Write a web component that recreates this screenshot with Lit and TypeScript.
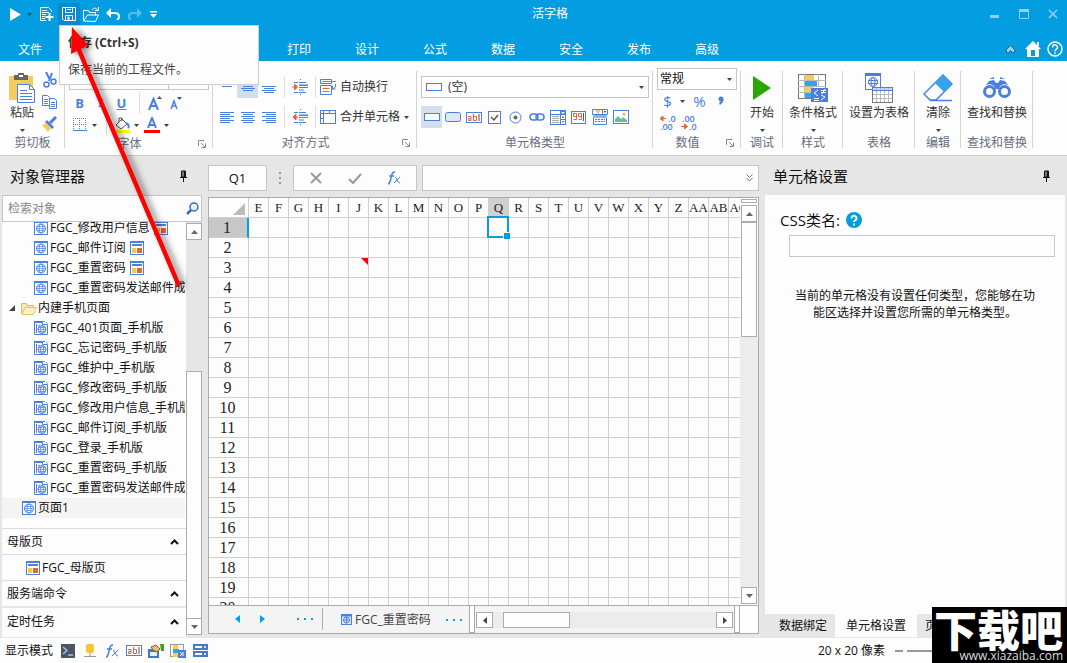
import { LitElement, html, svg, css, nothing } from "lit";
import { customElement, state } from "lit/decorators.js";
import { classMap } from "lit/directives/class-map.js";

const B = "#4a7fe0";
const icon = (w: number, h: number, body: unknown) =>
  html`<svg width=${w} height=${h} viewBox="0 0 ${w} ${h}" fill="none" aria-hidden="true">${body}</svg>`;

const caret = () => icon(5, 3, svg`<path d="M0 0h5L2.500 3z" fill="#444"/>`);
const launcher = () => icon(8, 8, svg`<path d="M.5 6V.5H6" stroke="#888"/><path d="M3 3l4 4M7.500 3.500v4h-4" stroke="#888"/>`);
const globePage = () => icon(14, 14, svg`
  <rect x=".5" y=".5" width="13" height="13" fill="#fff" stroke=${B}/><path d="M0 0h14v2H0z" fill=${B}/>
  <circle cx="7" cy="7.500" r="4.500" stroke=${B}/><path d="M2 7.500h10M3 5.500h8M3 9.500h8" stroke=${B} stroke-width=".7"/>
  <ellipse cx="7" cy="7.500" rx="2" ry="4.500" stroke=${B} stroke-width=".8"/>`);
const phonePage = () => icon(14, 14, svg`
  <path d="M.5.5h8v3h5v10H.5z" fill="#fff" stroke=${B}/><path d="M0 0h8v2H0z" fill=${B}/><path d="M2.500 3v9" stroke=${B}/>
  <circle cx="8" cy="8.500" r="4" stroke=${B}/><path d="M4 8.500h8M5 6.500h6M5 10.500h6" stroke=${B} stroke-width=".7"/>
  <ellipse cx="8" cy="8.500" rx="1.500" ry="4" stroke=${B} stroke-width=".8"/>
  <path d="M9 .5h2M12 1l1.500 1.500M4 5l2-1" stroke="#2aa8e8"/>`);
const masterPage = () => icon(14, 14, svg`
  <rect x=".5" y=".5" width="13" height="13" fill="#fff" stroke=${B}/><path d="M0 0h14v2H0zM2 3h10v2H2z" fill=${B}/>
  <path d="M2 7h4v5H2z" fill="#f6c945"/><path d="M7 7h5v5H7z" fill="#e2673a"/>`);
const folder = () => icon(16, 13, svg`
  <path d="M.5 11.500v-10h5l1 2h6v2" fill="#f8e6ae" stroke="#dcb964"/><path d="M1 12.500l3-7h11.500l-3 7z" fill="#fdf0c4" stroke="#e3c274"/>`);
const pin = () => icon(7, 12, svg`<path d="M1.500 1h4v6h-4z" fill="#777" stroke="#111"/><path d="M4 1h2v6H4z" fill="#111"/><path d="M0 7.500h7M3.500 8v4" stroke="#111"/>`);
const chevronUp = () => icon(9, 6, svg`<path d="M1 5l3.500-3.500L8 5" stroke="#111" stroke-width="2"/>`);
const up = () => icon(7, 4, svg`<path d="M0 4h7L3.500 0z" fill="#666"/>`);
const down = () => icon(7, 4, svg`<path d="M0 0h7L3.500 4z" fill="#666"/>`);

const lines = (ws: number[], mode: "l" | "c" | "r", top: number) =>
  icon(14, 14, ws.map((w, i) => {
    const x = mode === "l" ? 0 : mode === "r" ? 14 - w : (14 - w) / 2;
    return svg`<rect x=${x} y=${top + i * 2} width=${w} height="1" fill=${B}/>`;
  }));
const para = [14, 10, 14, 10, 14, 10];
const indent = (out: boolean) => icon(16, 16, svg`
  <path d="M8 .5h1M2 3.500h4M7 3.500h7M7 6h9M7 8.500h9M7 11h5M2 13.500h4M7 13.500h7M8 15.500h1" stroke=${B}/><path d="M7 6h9v1H7z" fill=${B}/>
  <path d=${out ? "M1 8h5M4 5L1 8l3 3z" : "M0 8h5M2.500 5l3 3-3 3z"} stroke="#e2673a" fill="#e2673a"/>`);
const wrapIcon = () => icon(16, 16, svg`
  <path d="M.5.5h11v4H.5zM.5 6.500h11v9H.5z" stroke=${B}/><path d="M2 2.500h14M2.500 9.500h7M2.500 12.500h7" stroke="#e2673a"/><path d="M15.500 5v3l-3 2M12.500 7v3h3" stroke=${B}/>`);
const mergeIcon = () => icon(16, 14, svg`<rect x=".5" y=".5" width="15" height="13" stroke=${B}/><path d="M.5 3.500h15M3.500.5v13M9.500.5v3M.5 8.500h3" stroke=${B}/>`);

const cut = () => icon(14, 16, svg`<path d="M3 0l4 8M9 1L6 9" stroke=${B} stroke-width="2"/><circle cx="3.500" cy="12.500" r="2.500" stroke=${B} stroke-width="1.500"/><circle cx="10.500" cy="9.500" r="2.500" stroke=${B} stroke-width="1.500"/>`);
const copy = () => icon(16, 14, svg`<path d="M.5.5h5l2 2v8h-7zM7.500 3.500h5l2 2v8h-7z" fill="#fff" stroke=${B}/><path d="M2 4.500h4M2 6.500h4M2 8.500h4M9 7.500h4M9 9.500h4M9 11.500h4" stroke=${B}/>`);
const brush = () => icon(16, 16, svg`<path d="M14 1L8 7" stroke=${B} stroke-width="3"/><path d="M5 4l7 7-2 2-7-7z" fill=${B}/><path d="M0 9l4-2 5 5-3 4z" fill="#f3cd5c"/>`);
const paste = () => icon(26, 30, svg`
  <path d="M0 3h24v24H0z" fill="#f3cd5c"/><path d="M5 2h4V0h6v2h4v5H5z" fill="#666"/><path d="M10 2h4v2h-4z" fill="#fff"/>
  <path d="M8.500 11.500h12l5 5v13h-17z" fill="#fff" stroke=${B}/><path d="M20.500 11.500v5h5M11 17.500h7M11 20.500h12M11 23.500h12M11 26.500h12" stroke=${B}/>`);

const rectIcon = () => icon(16, 8, svg`<rect x=".5" y=".5" width="15" height="7" fill="#fff" stroke=${B}/>`);
const cellTypes: [string, () => unknown][] = [
  ["空", rectIcon],
  ["按钮", () => icon(16, 10, svg`<rect x=".5" y=".5" width="15" height="9" rx="2" fill="#dbe7fb" stroke=${B}/>`)],
  ["文本框", () => icon(16, 11, svg`<rect x=".5" y=".5" width="15" height="10" fill="#fff" stroke=${B}/><g stroke="#e2673a"><path d="M2 4.500h3v4H2.500v-2H5M7.500 2v6.500h3v-4h-3"/></g><path d="M13 2v7" stroke="#555"/>`)],
  ["复选框", () => icon(13, 13, svg`<rect x=".5" y=".5" width="12" height="12" fill="#fff" stroke=${B}/><path d="M3 6l3 3 4-5" stroke="#555" stroke-width="1.500"/>`)],
  ["单选框", () => icon(13, 13, svg`<circle cx="6.500" cy="6.500" r="5.500" fill="#fff" stroke=${B}/><circle cx="6.500" cy="6.500" r="2" fill="#666"/>`)],
  ["超链接", () => icon(16, 8, svg`<rect x="1" y="1" width="8" height="6" rx="3" stroke=${B} stroke-width="1.500"/><rect x="7" y="1" width="8" height="6" rx="3" stroke=${B} stroke-width="1.500"/>`)],
  ["组合框", () => icon(16, 15, svg`<rect x=".5" y=".5" width="15" height="14" fill="#fff" stroke=${B}/><path d="M10 0h6v5h-6z" fill=${B}/><path d="M11 2h4l-2 2z" fill="#fff"/><path d="M.5 4.500h15M10.500 4v11M10.500 9.500h5" stroke=${B}/><path d="M2 6.500h7M2 8.500h7M2 10.500h7M2 12.500h7" stroke="#aaa"/><path d="M12 8l1-2 1 2zM12 11h2l-1 2z" fill="#444"/>`)],
  ["数字", () => icon(15, 13, svg`<rect x=".5" y=".5" width="14" height="12" fill="#fff" stroke=${B}/><path d="M2.500 8.500h3v-6h-3v3h3M7.500 8.500h3v-6h-3v3h3" stroke="#e2673a"/><path d="M12.500 2v8" stroke="#555"/>`)],
  ["日期", () => icon(16, 16, svg`<path d="M.5.5h15v5H.5zM1.500 6.500h13v9h-13z" fill="#fff" stroke=${B}/><path d="M10.500 0v6" stroke=${B}/><path d="M4 1l2 2 2-2M6 3v2" stroke="#f3b83c" stroke-width="1.500"/><path d="M11.500 2h3L13 4z" fill="#555"/><path d="M1 6h14v3H1z" fill="#8fb2f2"/><path d="M3 10.500h10M3 12.500h10" stroke="#b0604a" stroke-dasharray="2 1"/>`)],
  ["图片", () => icon(16, 14, svg`<rect x=".5" y=".5" width="15" height="13" fill="#fff" stroke=${B}/><circle cx="11" cy="4" r="1.500" fill="#f3b83c"/><path d="M2 12V9l3-3 3 3 2-2 4 3v2z" fill="#5fc29a"/>`)],
];

const tabs = ["打印", "设计", "公式", "数据", "安全", "发布", "高级"];
const columns = ["E", "F", "G", "H", "I", "J", "K", "L", "M", "N", "O", "P", "Q", "R", "S", "T", "U", "V", "W", "X", "Y", "Z", "AA", "AB", "AC"];
const rows = Array.from({ length: 20 }, (_, i) => i + 1);
const pcPages: [string, boolean][] = [["FGC_修改用户信息", true], ["FGC_邮件订阅", true], ["FGC_重置密码", true], ["FGC_重置密码发送邮件成功", false]];
const phonePages = ["FGC_401页面_手机版", "FGC_忘记密码_手机版", "FGC_维护中_手机版", "FGC_修改密码_手机版", "FGC_修改用户信息_手机版", "FGC_邮件订阅_手机版", "FGC_登录_手机版", "FGC_重置密码_手机版", "FGC_重置密码发送邮件成功_手机版"];

@customElement("app-root")
export class AppRoot extends LitElement {
  @state() private cellType = 0;

  static styles = css`
    :host { display: block; color: #111; font: 12px/16px "Open Sans", "Noto Sans CJK SC", sans-serif; }
    * { box-sizing: border-box; }
    svg { display: block; flex: none; }
    button, input, select { font: inherit; color: inherit; margin: 0; padding: 0; border: 0; border-radius: 0; background: none; outline: none; }
    button { display: flex; align-items: center; justify-content: center; }
    select { appearance: none; }
    a { color: inherit; text-decoration: none; }
    .app { position: relative; display: flex; flex-direction: column; height: 100vh; overflow: hidden; background: #fdfdfd; }

    .top { background: #039de2; color: #fff; flex: none; }
    .titlebar { display: grid; grid-template-columns: 1fr auto 1fr; align-items: center; height: 28px; }
    .quick { display: flex; align-items: center; padding-left: 9px; }
    .quick button { width: 22px; height: 22px; }
    .quick .play { width: 13px; }
    .quick .narrow { width: 14px; }
    .quick .save { background: #0b88cf; }
    .title { padding-left: 33px; }
    .winbtns { display: flex; justify-content: flex-end; gap: 17px; padding-right: 8px; }
    .winbtns button { width: 12px; height: 12px; }
    .tabs { display: flex; align-items: center; height: 33px; padding: 0 4px 0 0; }
    .tabs a { width: 68px; text-align: center; height: 33px; line-height: 23px; padding-top: 10px; }
    .tabs .file { width: 60px; margin-right: 205px; }
    .tools { display: flex; align-items: center; gap: 6px; margin-left: auto; padding-top: 9px; }
    .tools .fold { width: 18px; }

    .ribbon { display: flex; flex: none; height: 95px; padding-top: 7px; border-bottom: 1px solid #cfcfcf; color: #333; }
    .group { display: flex; flex-direction: column; flex: none; padding-bottom: 4px; background: linear-gradient(#d4d4d4, #d4d4d4) right 3px / 1px 77px no-repeat; }
    .gbody { flex: 1; display: flex; }
    .glabel { display: flex; align-items: center; justify-content: center; height: 16px; color: #666e80; }
    .glabel.launch { padding-right: 3px; }
    .glabel.launch span { flex: 1; text-align: center; }
    .glabel button { width: 16px; height: 16px; }
    .g65 { width: 65px; } .g148 { width: 148px; } .g204 { width: 204px; } .g236 { width: 236px; } .g88 { width: 88px; }
    .g42 { width: 42px; } .g60 { width: 60px; } .g72 { width: 72px; } .g46 { width: 46px; }
    .big { flex-direction: column; justify-content: flex-start; flex: 1; padding-top: 3px; white-space: nowrap; }
    .big .pic { height: 34px; display: flex; align-items: center; }
    .big .car { height: 11px; display: flex; align-items: flex-end; }
    .pastebtn { flex: none; width: 44px; }
    .smallcol { display: flex; flex-direction: column; gap: 6px; padding-top: 4px; }
    .smallcol button { width: 12px; height: 16px; }
    .col { flex: 1; display: flex; flex-direction: column; }
    .line { display: flex; align-items: center; height: 22px; }
    .line button { width: 21px; height: 22px; flex: none; }
    .line .on, .types .on { background: #d5deec; }
    .line .wide { width: auto; gap: 4px; }
    .line .dd { width: 9px; }
    .sep { width: 1px; height: 22px; background: #ddd; flex: none; }
    .fonts { padding-left: 4px; }
    .fonts .sep { margin: 0 4px 0 7px; }
    .fonts .combos { display: flex; height: 22px; margin-bottom: 2px; }
    .fonts select { border: 1px solid #c6c6c6; height: 22px; padding-left: 3px; }
    .fonts .face { width: 100px; } .fonts .size { width: 40px; border-left: 0; }
    .glyph { color: #4a7fe0; font-weight: 700; font-size: 13px; line-height: 16px; }
    .it { font-style: italic; font-family: "Liberation Serif", serif; }
    .un { text-decoration: underline; }
    .aligns { padding: 8px 0 0 3px; gap: 8px; }
    .aligns .sep { margin: 0 4px 0 5px; }
    .types-g { padding: 8px 4px 0 4px; gap: 8px; }
    .picker { display: flex; align-items: center; height: 22px; border: 1px solid #c6c6c6; background: #fff; padding: 0 4px; gap: 4px; }
    .picker select { flex: 1; min-width: 0; height: 20px; padding-left: 2px; }
    .types { display: flex; }
    .types button { width: 21px; height: 22px; flex: none; }
    .nums { padding-left: 4px; }
    .nums .picker { width: 80px; padding: 0 4px 0 0; color: #111; }
    .nums .line button { color: #4a7fe0; font-size: 15px; }
    .nums .pct { margin-left: 2px; }
    .nums .deci { height: 20px; }
    .deci svg { overflow: visible; }
    .deci text { font: 600 9px "Open Sans", sans-serif; fill: #4a7fe0; }

    .work { flex: 1; min-height: 0; display: grid; grid-template-columns: 200px minmax(0, 1fr) 300px; gap: 6px; padding: 0 2px 1px; background: #e6e6e6; }
    .panel { display: flex; flex-direction: column; min-height: 0; min-width: 0; }
    .phead { display: flex; align-items: center; justify-content: space-between; height: 39px; flex: none; padding: 0 15px 0 8px; font-size: 15px; line-height: 20px; }
    .search { display: flex; align-items: center; height: 27px; border: 1px solid #c6c6c6; background: #fdfdfd; padding: 0 2px 0 5px; flex: none; }
    .search input { flex: 1; min-width: 0; }
    .search input::placeholder { color: #888; opacity: 1; }
    .objects { flex: 1; min-height: 0; display: flex; }
    .lists { flex: 1; min-width: 0; display: flex; flex-direction: column; background: #fdfdfd; }
    .tree { flex: 1; min-height: 0; overflow: hidden; display: flex; flex-direction: column; margin-right: 1px; }
    .tree ul { list-style: none; margin: -4px 0 0; padding: 0; }
    .tree li { display: flex; align-items: center; height: 20px; white-space: nowrap; gap: 2px; padding-left: 32px; }
    .tree .more { gap: 4px; }
    .tree .more span { margin-left: -2px; }
    .tree .dir { padding-left: 7px; gap: 1px; }
    .tree .dir button { width: 11px; justify-content: flex-start; }
    .tree .root { padding-left: 20px; background: #f4f4f4; }
    .sect { display: flex; align-items: center; justify-content: space-between; flex: none; height: 26px; border: 0; border-top: 1px solid #d9dde0; padding: 0 7px 0 5px; width: 100%; }
    .leaf { display: flex; align-items: center; flex: none; height: 26px; gap: 2px; border-top: 1px solid #d9dde0; padding-left: 24px; }
    .last { height: 31px; border-top: 2px solid #e6e6e6; padding-bottom: 2px; }
    .vbar { display: flex; flex-direction: column; width: 16px; padding: 1px 0 2px; flex: none; }
    .vbar button, .hbar button { background: #fff; border: 1px solid #ababab; flex: none; }
    .vbar button { height: 17px; }
    .thumb { background: #fdfdfd; border: 1px solid #ababab; }
    .before { flex: 131; } .obj-thumb { flex: 247; margin-bottom: -1px; }

    .center { display: flex; flex-direction: column; min-width: 0; min-height: 0; padding: 9px 0 3px; gap: 6px; }
    .formula { display: flex; height: 26px; flex: none; }
    .box { border: 1px solid #c6c6c6; background: #fdfdfd; }
    .name { width: 59px; text-align: center; font-size: 13px; }
    .dots { width: 26px; display: flex; align-items: center; justify-content: center; }
    .fx { display: flex; width: 124px; padding: 0 3px; margin-right: 5px; }
    .fx button { flex: 1; }
    .expr { flex: 1; display: flex; align-items: center; padding-right: 5px; min-width: 0; }
    .expr input { flex: 1; min-width: 0; }
    .book { flex: 1; min-height: 0; display: flex; flex-direction: column; border: 1px solid #ababab; background: #fdfdfd; }
    .sheet { flex: 1; min-height: 0; display: flex; }
    .cells { flex: 1; min-width: 0; overflow: hidden; }
    table { table-layout: fixed; border-spacing: 0; width: 540px; font-family: "Liberation Serif", "Noto Sans CJK SC", serif; }
    th, td { width: 20px; height: 20px; padding: 0; border: 0 solid #d0d0d0; border-width: 0 1px 1px 0; font-weight: 400; font-size: 13px; line-height: 19px; text-align: center; color: #222; white-space: nowrap; }
    tbody th { font-size: 16px; padding-right: 2px; }
    .corner { width: 40px; }
    .corner svg { margin: 3px 3px 0 auto; }
    th.cur { background: #d0d0d0; }
    tbody th.cur { background: #c8c8c8; border-right: 2px solid #039de2; }
    .sel, .note { position: relative; }
    .sel::before { content: ""; position: absolute; inset: -2px -1px -1px -2px; border: 2px solid #039de2; }
    .sel::after { content: ""; position: absolute; right: -2px; bottom: -2px; width: 6px; height: 6px; background: #039de2; border: solid #fff; border-width: 1px 0 0 1px; }
    .note::after { content: ""; position: absolute; top: 0; right: 0; width: 7px; height: 7px; background: #f00; clip-path: polygon(0 0, 100% 0, 100% 100%); }
    .sheet .vbar { width: 18px; padding: 1px; background: #fdfdfd; }
    .split { height: 4px; border: 1px solid #ababab; margin-bottom: 2px; flex: none; }
    .sheet-thumb { flex: 114; } .after { flex: 251; background: #ececec; margin: 0 -1px; }
    .bottom { display: flex; flex: none; height: 28px; border-top: 1px solid #ababab; background: #f4f4f4; color: #444; }
    .nav { display: flex; align-items: center; padding-left: 16px; width: 114px; border-right: 1px solid #ababab; margin: 2px 0 3px; }
    .nav button { width: 25px; flex: none; }
    .nav .dotb { margin-left: 10px; width: 40px; }
    .tab { flex: 1; display: flex; align-items: center; justify-content: flex-start; gap: 3px; padding-left: 18px; min-width: 0; white-space: nowrap; }
    .tab .trail { margin-left: 12px; }
    .handle { width: 6px; background: #fff; border: 1px solid #ababab; border-width: 0 1px 1px; flex: none; }
    .hbar { display: flex; width: 259px; padding: 6px 1px 5px; background: #f4f4f4; flex: none; }
    .hbar button { width: 17px; }
    .htrack { flex: 1; display: flex; background: #ececec; padding-left: 10px; }
    .htrack .thumb { width: 67px; }
    .blank { width: 18px; background: #fdfdfd; }

    .set { flex: 1; min-height: 0; background: #fdfdfd; padding: 14px 10px 0 15px; }
    .css { display: flex; align-items: center; gap: 6px; font-size: 15px; line-height: 22px; }
    .css button { width: 16px; height: 16px; }
    .cssinput { display: block; width: calc(100% - 9px); height: 22px; margin: 4px 0 0 9px; border: 1px solid #c6c6c6; padding: 0 4px; }
    .hint { margin: 30px auto 0 15px; width: 240px; line-height: 17px; text-align: center; }
    .ptabs { display: flex; flex: none; height: 23px; }
    .ptabs button { width: 82px; }
    .ptabs .first { width: 70px; padding-left: 6px; }
    .ptabs .act { background: #fdfdfd; }
    .ptabs .third { width: auto; padding-left: 8px; }

    .status { display: flex; align-items: center; flex: none; height: 25px; padding-left: 5px; }
    .modes { display: flex; gap: 6px; padding-left: 7px; }
    .modes button { width: 16px; height: 16px; }
    .zoomer { margin-left: auto; display: flex; align-items: center; gap: 7px; width: 249px; }
    .zoomer button { width: 8px; height: 8px; margin-left: 3px; }
    .zoomer input { appearance: none; width: 120px; height: 2px; background: #999; margin-left: -3px; }

    .tip { position: absolute; left: 59px; top: 25px; width: 200px; height: 60px; padding: 9px 8px; border: 1px solid #cfcfcf; background: #fdfdfd; color: #444; display: flex; flex-direction: column; gap: 11px; }
    .tip b { color: #333; }
    .arrow { position: absolute; left: 60px; top: 20px; filter: drop-shadow(4px 1px 3px rgba(0, 0, 0, 0.5)); pointer-events: none; }
    .mark { position: absolute; right: 0; bottom: 0; width: 135px; height: 56px; background: #000; color: #fff; display: flex; flex-direction: column; overflow: hidden; }
    .mark strong { font: 900 43px/42px "Noto Sans CJK SC", sans-serif; padding-left: 2px; white-space: nowrap; }
    .mark span { text-align: right; padding-right: 4px; line-height: 14px; color: #ddd; }
  `;

  private big(label: string, pic: unknown, drop: boolean) {
    return html`<button class="big"><span class="pic">${pic}</span><span>${label}</span>${drop ? html`<span class="car">${caret()}</span>` : nothing}</button>`;
  }

  private top() {
    return html`<header class="top">
      <div class="titlebar">
        <div class="quick">
          <button class="play" aria-label="运行">${icon(11, 13, svg`<path d="M0 0l11 6.500L0 13z" fill="#fff"/>`)}</button>
          <button class="narrow" aria-label="运行选项">${icon(5, 3, svg`<path d="M0 0h5L2.500 3z" fill="#1d4f6c"/>`)}</button>
          <button aria-label="新建">${icon(14, 15, svg`<path d="M11.500 5V3.500l-3-3h-8v13H6" stroke="#fff"/><path d="M2 3.500h5M2 5.500h7M2 7.500h4M2 9.500h3M2 11.500h3" stroke="#fff"/><path d="M9.500 6v8M5.500 10h8" stroke="#fff" stroke-width="2"/>`)}</button>
          <button class="save" aria-label="保存">${icon(14, 14, svg`<path d="M.5.5h13v13H2l-1.500-1.500z" stroke="#fff"/><path d="M3.500.5v5h7v-5M3.500 13.500v-5h7v5" stroke="#fff"/><path d="M5 2.500h4M6 10h1v3H6z" stroke="#fff"/>`)}</button>
          <button aria-label="打开">${icon(17, 15, svg`<path d="M.5 13.500v-10h5l1 2h6v3M.5 14l4-6h11l-3 6.500z" stroke="#fff"/><path d="M9 3c2-3 4-2 6 0M15.500 0v3.500H12" stroke="#fff"/>`)}</button>
          <button aria-label="撤销">${icon(14, 12, svg`<path d="M1 5h8c5 0 5 5 2 7" stroke="#fff" stroke-width="2"/><path d="M0 5l5-5v10z" fill="#fff"/>`)}</button>
          <button aria-label="重做">${icon(14, 12, svg`<path d="M13 5H5C0 5 0 10 3 12" stroke="#56bdeb" stroke-width="2"/><path d="M14 5L9 0v10z" fill="#56bdeb"/>`)}</button>
          <button class="narrow" aria-label="自定义">${icon(7, 7, svg`<path d="M0 0h7v1.500H0zM0 3h7L3.500 7z" fill="#fff"/>`)}</button>
        </div>
        <span class="title">活字格</span>
        <div class="winbtns">
          <button aria-label="最小化">${icon(10, 10, svg`<path d="M0 6h9v3H0z" fill="#8fd3f2"/>`)}</button>
          <button aria-label="最大化">${icon(10, 10, svg`<path d="M.5 1.500h9v8h-9z" stroke="#8fd3f2"/><path d="M0 0h10v3H0z" fill="#8fd3f2"/>`)}</button>
          <button aria-label="关闭">${icon(10, 10, svg`<path d="M1 1l8 8M9 1L1 9" stroke="#8fd3f2" stroke-width="1.500"/>`)}</button>
        </div>
      </div>
      <nav class="tabs">
        <a class="file" href="#">文件</a>${tabs.map((t) => html`<a href="#">${t}</a>`)}
        <div class="tools">
          <button class="fold" aria-label="折叠功能区">${icon(9, 8, svg`<path d="M.5 7.500v-3l4-4 4 4v3h-2l-2-2-2 2z" fill="#8fd3f2" stroke="#44606e"/>`)}</button>
          <button aria-label="主页">${icon(16, 16, svg`<path d="M8 0l8 8h-2v8H2V8H0z" fill="#fff"/><path d="M12 1h2v4h-2z" fill="#fff"/><path d="M6 9h4v6H6z" fill="#039de2"/>`)}</button>
          <button aria-label="帮助">${icon(16, 16, svg`<circle cx="8" cy="8" r="7" stroke="#fff" stroke-width="1.500"/><path d="M5.500 6.500c0-4 5-3 5 0 0 2-2.500 1.500-2.500 4M8 11.500v1.500" stroke="#fff" stroke-width="1.500"/>`)}</button>
        </div>
      </nav>
    </header>`;
  }

  private ribbon() {
    return html`<section class="ribbon">
      <div class="group g65">
        <div class="gbody">
          <button class="big pastebtn"><span class="pic">${paste()}</span><span>粘贴</span><span class="car">${caret()}</span></button>
          <div class="smallcol"><button aria-label="剪切">${cut()}</button><button aria-label="复制">${copy()}</button><button aria-label="格式刷">${brush()}</button></div>
        </div>
        <div class="glabel">剪切板</div>
      </div>
      <div class="group g148">
        <div class="gbody"><div class="col fonts">
          <div class="combos">
            <select class="face" aria-label="字体"><option>微软雅黑主题</option></select>
            <select class="size" aria-label="字号"><option></option></select>
          </div>
          <div class="line">
            <button class="glyph">B</button><button class="glyph it">I</button><button class="glyph un">U</button>
            <span class="sep"></span>
            <button aria-label="增大字号">${icon(14, 14, svg`<path d="M1 14L5.500 3 10 14M3 10h5" stroke=${B} stroke-width="2"/><path d="M9 3h5l-2.500-3z" fill="#555"/>`)}</button>
            <button aria-label="减小字号">${icon(12, 14, svg`<path d="M1 13l3-8 3 8M2 10h4" stroke=${B} stroke-width="1.500"/><path d="M7 1h5L9.500 4z" fill="#555"/>`)}</button>
          </div>
          <div class="line">
            <button aria-label="边框">${icon(14, 14, svg`<path d="M.5 0v12M6.500 0v12M12.500 0v12M0 .5h14M0 6.500h14" stroke="#777" stroke-dasharray="1 1"/><path d="M0 12.500h14" stroke=${B}/>`)}</button>
            <button class="dd" aria-label="边框选项">${caret()}</button>
            <span class="sep"></span>
            <button aria-label="填充">${icon(16, 16, svg`<path d="M2 8l6-6 5 5-6 5z" fill="#fff" stroke="#555"/><path d="M5 5V1h3v3" stroke="#555"/><path d="M12 6c3 1 3 4 2 5" stroke=${B} stroke-width="2"/><path d="M0 13h16v3H0z" fill="#ff0"/>`)}</button>
            <button class="dd" aria-label="填充选项">${caret()}</button>
            <button aria-label="字体颜色">${icon(16, 16, svg`<path d="M4 11L8 1l4 10M5 8h6" stroke=${B} stroke-width="2"/><path d="M0 13h16v3H0z" fill="red"/>`)}</button>
            <button class="dd" aria-label="字体颜色选项">${caret()}</button>
          </div>
        </div></div>
        <div class="glabel launch"><span>字体</span><button aria-label="字体设置">${launcher()}</button></div>
      </div>
      <div class="group g204">
        <div class="gbody"><div class="col aligns">
          <div class="line">
            <button aria-label="顶端对齐">${lines([14, 10, 14, 10], "c", 0)}</button><button class="on" aria-label="垂直居中">${lines([14, 10, 14, 10], "c", 4)}</button><button aria-label="底端对齐">${lines([14, 10, 14, 10], "c", 6)}</button>
            <span class="sep"></span><button aria-label="增加缩进">${indent(false)}</button><span class="sep"></span>
            <button class="wide">${wrapIcon()}自动换行</button>
          </div>
          <div class="line">
            <button aria-label="左对齐">${lines(para, "l", 2)}</button><button aria-label="居中">${lines(para, "c", 2)}</button><button aria-label="右对齐">${lines(para, "r", 2)}</button>
            <span class="sep"></span><button aria-label="减少缩进">${indent(true)}</button><span class="sep"></span>
            <button class="wide">${mergeIcon()}合并单元格${caret()}</button>
          </div>
        </div></div>
        <div class="glabel launch"><span>对齐方式</span><button aria-label="对齐设置">${launcher()}</button></div>
      </div>
      <div class="group g236">
        <div class="gbody"><div class="col types-g">
          <div class="picker">${rectIcon()}<select aria-label="单元格类型"><option>(空)</option></select>${caret()}</div>
          <div class="types">${cellTypes.map(([n, ic], i) => html`<button aria-label=${n} class=${classMap({ on: i === this.cellType })} @click=${() => (this.cellType = i)}>${ic()}</button>`)}</div>
        </div></div>
        <div class="glabel">单元格类型</div>
      </div>
      <div class="group g88">
        <div class="gbody"><div class="col nums">
          <div class="picker"><select aria-label="数字格式"><option>常规</option></select>${caret()}</div>
          <div class="line"><button>$</button><button class="dd" aria-label="货币选项">${caret()}</button><button class="pct">%</button><button aria-label="千位分隔">${icon(6, 10, svg`<circle cx="3" cy="3" r="2.500" fill=${B}/><path d="M4.500 3c0 3-1 4-3 5" stroke=${B} stroke-width="2"/>`)}</button></div>
          <div class="line deci">
            <button aria-label="增加小数位">${icon(16, 16, svg`<path d="M1 4.500h5M3 2v5L0 4.500z" stroke="#e2673a" fill="#e2673a"/><text x="8" y="8">.0</text><text x="0" y="16">.00</text>`)}</button>
            <button aria-label="减少小数位">${icon(16, 16, svg`<path d="M0 12.500h6M3.500 10v5l3-2.500z" stroke="#e2673a" fill="#e2673a"/><text x="1" y="8">.00</text><text x="8" y="16">.0</text>`)}</button>
          </div>
        </div></div>
        <div class="glabel launch"><span>数值</span><button aria-label="数值设置">${launcher()}</button></div>
      </div>
      <div class="group g42"><div class="gbody">${this.big("开始", icon(18, 24, svg`<path d="M0 0l18 12L0 24z" fill="#28a800"/>`), true)}</div><div class="glabel">调试</div></div>
      <div class="group g60"><div class="gbody">${this.big("条件格式", icon(30, 28, svg`
        <rect x=".5" y=".5" width="27" height="24" fill="#fff" stroke="#777"/><path d="M7 1h9v5H7z" fill="#f3cd5c"/><path d="M7 7h12v6H7z" fill="#31a5ea"/><path d="M7 13h9v5H7z" fill="#f3cd5c"/><path d="M7 19h6v5H7z" fill="#31a5ea"/>
        <path d="M0 6.500h28M0 12.500h28M0 18.500h14M6.500 0v25M20.500 0v13" stroke="#bbb"/><path d="M13 14h17v14H13z" fill=${B}/><path d="M20 16l-4 3 4 3M16 24.500h5M16 26.500h5M23 16.500h5M23 18.500h5M27 15l-3 5M23 21l4 2-4 3" stroke="#fff"/>`), true)}</div><div class="glabel">样式</div></div>
      <div class="group g72"><div class="gbody">${this.big("设置为表格", icon(28, 30, svg`
        <rect x=".5" y=".5" width="15" height="16" fill="#fff" stroke=${B}/><path d="M0 0h16v3H0z" fill=${B}/><circle cx="8" cy="9" r="4.500" stroke=${B}/><path d="M3 7.500h10M3 10.500h10" stroke=${B}/><ellipse cx="8" cy="9" rx="2" ry="4.500" stroke=${B}/>
        <rect x="7.500" y="14.500" width="20" height="15" fill="#fff" stroke="#777"/><path d="M8 15h19v3H8z" fill="#c9daf8"/><path d="M8 21.500h19M8 25.500h19M11.500 15v14M15.500 15v14M19.500 15v14M23.500 15v14" stroke="#bbb"/><path d="M7 17.500h21M7 14.500h21" stroke=${B}/>`), false)}</div><div class="glabel">表格</div></div>
      <div class="group g46"><div class="gbody">${this.big("清除", icon(30, 28, svg`
        <path d="M20 1l9 9-16 16H7l-6-6z" fill="#fff" stroke=${B} stroke-width="1.500"/><path d="M20 1l9 9-8 8-9-9z" fill="#31a5ea"/><path d="M7 26.500h22" stroke=${B} stroke-width="1.500"/>`), true)}</div><div class="glabel">编辑</div></div>
      <div class="group g72"><div class="gbody">${this.big("查找和替换", icon(28, 22, svg`
        <circle cx="6.500" cy="14.500" r="5" stroke=${B} stroke-width="3"/><circle cx="21.500" cy="14.500" r="5" stroke=${B} stroke-width="3"/><path d="M3 8l3-4 5-1 2 3h2l2-3 5 1 3 4-4-1-4 2-1 3h-4l-1-3-4-2z" fill=${B}/><path d="M6 2l5-2v2zM22 2l-5-2v2z" fill=${B}/>`), false)}</div><div class="glabel">查找和替换</div></div>
    </section>`;
  }

  private objects() {
    return html`<aside class="panel">
      <div class="phead"><span>对象管理器</span><button aria-label="固定">${pin()}</button></div>
      <div class="search"><input aria-label="检索对象" placeholder="检索对象" /><button aria-label="搜索">${icon(13, 13, svg`<circle cx="8" cy="5" r="4" fill="#e4f0fb" stroke="#2a6cc0" stroke-width="1.500"/><path d="M5 8l-4 4" stroke="#2a6cc0" stroke-width="2.500"/>`)}</button></div>
      <div class="objects">
        <div class="lists">
          <div class="tree"><ul>
            ${pcPages.map(([n, m]) => html`<li class=${classMap({ more: m })}>${globePage()}<span>${n}</span>${m ? masterPage() : nothing}</li>`)}
            <li class="dir"><button aria-label="折叠">${icon(6, 6, svg`<path d="M6 0v6H0z" fill="#444"/>`)}</button>${folder()}<span>内建手机页面</span></li>
            ${phonePages.map((n) => html`<li>${phonePage()}<span>${n}</span></li>`)}
            <li class="root">${globePage()}<span>页面1</span></li>
          </ul></div>
          <button class="sect">母版页${chevronUp()}</button>
          <div class="leaf">${masterPage()}<span>FGC_母版页</span></div>
          <button class="sect">服务端命令${chevronUp()}</button>
          <button class="sect last">定时任务${chevronUp()}</button>
        </div>
        <div class="vbar"><button aria-label="向上">${up()}</button><div class="before"></div><div class="thumb obj-thumb"></div><button aria-label="向下">${down()}</button></div>
      </div>
    </aside>`;
  }

  private sheet() {
    const dots = () => icon(16, 2, svg`<path d="M0 0h2v2H0zM7 0h2v2H7zM14 0h2v2h-2z" fill="#039de2"/>`);
    return html`<main class="center">
      <div class="formula">
        <input class="box name" aria-label="名称框" .value=${"Q1"} />
        <span class="dots">${icon(2, 12, svg`<path d="M0 0h2v2H0zM0 5h2v2H0zM0 10h2v2H0z" fill="#999"/>`)}</span>
        <div class="box fx">
          <button aria-label="取消">${icon(12, 12, svg`<path d="M1 1l10 10M11 1L1 11" stroke="#999" stroke-width="2"/>`)}</button>
          <button aria-label="确认">${icon(14, 11, svg`<path d="M1 6l4 4 8-9" stroke="#999" stroke-width="2"/>`)}</button>
          <button aria-label="函数">${this.fx()}</button>
        </div>
        <div class="box expr"><input aria-label="公式" />${icon(7, 8, svg`<path d="M.5.5l3 3 3-3M.5 4l3 3 3-3" stroke="#777"/>`)}</div>
      </div>
      <div class="book">
        <div class="sheet">
          <div class="cells"><table>
            <thead><tr><th class="corner">${icon(12, 12, svg`<path d="M12 0v12H0z" fill="#bbb"/>`)}</th>${columns.map((c) => html`<th scope="col" class=${classMap({ cur: c === "Q" })}>${c}</th>`)}</tr></thead>
            <tbody>${rows.map((r) => html`<tr><th scope="row" class=${classMap({ cur: r === 1 })}>${r}</th>${columns.map((c) => html`<td class=${classMap({ sel: r === 1 && c === "Q", note: r === 3 && c === "J" })}></td>`)}</tr>`)}</tbody>
          </table></div>
          <div class="vbar"><div class="split"></div><button aria-label="向上">${up()}</button><div class="thumb sheet-thumb"></div><div class="after"></div><button aria-label="向下">${down()}</button></div>
        </div>
        <div class="bottom">
          <div class="nav">
            <button aria-label="上一页">${icon(5, 8, svg`<path d="M5 0v8L0 4z" fill="#039de2"/>`)}</button><button aria-label="下一页">${icon(5, 8, svg`<path d="M0 0v8l5-4z" fill="#039de2"/>`)}</button>
            <button class="dotb" aria-label="更多">${dots()}</button>
          </div>
          <button class="tab">${icon(11, 11, svg`<rect x=".5" y=".5" width="10" height="10" fill="#dfe9fb" stroke=${B}/><path d="M0 1.500h11" stroke=${B} stroke-width="2"/><circle cx="5.500" cy="6" r="3" stroke=${B}/><path d="M2 6h7M5.500 3v6" stroke=${B}/>`)}<span>FGC_重置密码</span><span class="trail">${dots()}</span></button>
          <div class="handle"></div>
          <div class="hbar"><button aria-label="向左">${icon(4, 7, svg`<path d="M4 0v7L0 3.500z" fill="#444"/>`)}</button><div class="htrack"><div class="thumb"></div></div><button aria-label="向右">${icon(4, 7, svg`<path d="M0 0v7l4-3.500z" fill="#444"/>`)}</button></div>
          <div class="handle"></div><div class="blank"></div>
        </div>
      </div>
    </main>`;
  }

  private fx() {
    return icon(14, 14, svg`<path d="M1 13c2 0 2-2 3-6s1-6 4-6M2 5h5" stroke=${B} stroke-width="1.500"/><path d="M8 6c2 0 2 6 5 6M13 6l-6 6" stroke=${B}/>`);
  }

  private settings() {
    return html`<aside class="panel">
      <div class="phead"><span>单元格设置</span><button aria-label="固定">${pin()}</button></div>
      <div class="set">
        <div class="css"><label for="css-class">CSS类名:</label><button aria-label="说明">${icon(16, 16, svg`<circle cx="8" cy="8" r="8" fill="#039de2"/><path d="M5.500 6.500c0-4 5-3 5 0 0 2-2.500 1.500-2.500 3.500M8 11.500v2" stroke="#fff" stroke-width="2"/>`)}</button></div>
        <input id="css-class" class="cssinput" />
        <p class="hint">当前的单元格没有设置任何类型，您能够在功能区选择并设置您所需的单元格类型。</p>
      </div>
      <div class="ptabs"><button class="first">数据绑定</button><button class="act">单元格设置</button><button class="third">页</button></div>
    </aside>`;
  }

  private status() {
    const modes: [string, unknown][] = [
      ["命令", icon(14, 14, svg`<path d="M0 0h14v14H0z" fill="#4c5660"/><path d="M2 3l4 3.500L2 10M7 11h5" stroke="#9fc3ee" stroke-width="1.500"/>`)],
      ["数据", icon(12, 14, svg`<rect x="2" y="0" width="8" height="9" rx="2" fill="#f3c53e"/><path d="M6 9v3M0 12.500h12" stroke="#999"/>`)],
      ["公式", this.fx()],
      ["名称", cellTypes[2][1]()],
      ["条件", icon(16, 14, svg`<path d="M0 5h11v9H0z" fill="#3f78c8"/><path d="M2 8h7v4H2z" fill="#e8f0fb"/><path d="M3 3l5-2 4 4-3 3-4-2z" fill="#f0bd6a" stroke="#8a5a20"/><path d="M12 0h4v7h-3z" fill="#4a9a30"/>`)],
      ["格式", icon(16, 14, svg`<rect x=".5" y=".5" width="13" height="12" fill="#fff" stroke="#999"/><path d="M3 1h5v4H3z" fill="#f3cd5c"/><path d="M3 5h6v4H3z" fill="#31a5ea"/><path d="M3 9h5v4H3z" fill="#f3cd5c"/><path d="M8 6h8v8H8z" fill=${B}/><path d="M10 8l2 2-2 2M13 8v4" stroke="#fff"/>`)],
      ["布局", icon(15, 13, svg`<path d="M0 0h15v6H0zM0 7h15v6H0z" fill="#4878c8"/><path d="M2 3h7M2 10h7" stroke="#fff" stroke-width="2"/><path d="M11 2h2v2h-2zM11 9h2v2h-2z" fill="#cfe0ff"/>`)],
    ];
    return html`<footer class="status">
      <span>显示模式</span>
      <div class="modes">${modes.map(([n, ic]) => html`<button aria-label=${n}>${ic}</button>`)}</div>
      <div class="zoomer"><span>20 x 20 像素</span><button aria-label="缩小">${icon(8, 2, svg`<path d="M0 0h8v2H0z" fill="#999"/>`)}</button><input type="range" aria-label="缩放" /></div>
    </footer>`;
  }

  render() {
    return html`<div class="app">
      ${this.top()}${this.ribbon()}
      <div class="work">${this.objects()}${this.sheet()}${this.settings()}</div>
      ${this.status()}
      <div class="tip" role="tooltip"><b>保存 (Ctrl+S)</b><span>保存当前的工程文件。</span></div>
      <svg class="arrow" width="130" height="275" viewBox="0 0 130 275" aria-hidden="true"><path d="M12 7l16 18-7 4 100 236-4 2L17 31l-6 3z" fill="#f00"/></svg>
      <div class="mark"><strong>下载吧</strong><span>www.xiazaiba.com</span></div>
    </div>`;
  }
}
